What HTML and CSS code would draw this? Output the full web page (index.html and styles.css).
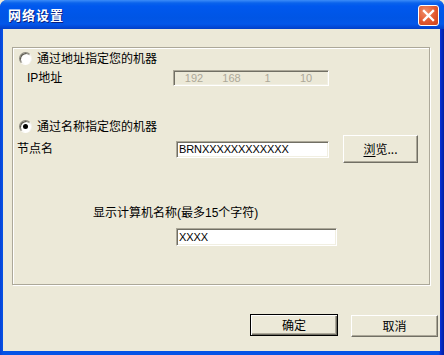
FILE: index.html
```html
<!DOCTYPE html>
<html lang="zh-CN">
<head>
    <meta charset="UTF-8">
    <title>网络设置</title>
    <link rel="stylesheet" href="styles.css">
</head>
<body>
    <div class="window">
        <div class="titlebar">
            <span class="title">网络设置</span>
            <span class="close">
                <svg width="13" height="13" viewBox="0 0 13 13">
                    <path d="M2 2 L11 11 M11 2 L2 11" stroke="#fff" stroke-width="2.4" stroke-linecap="square"/>
                </svg>
            </span>
        </div>

        <div class="client">
            <div class="group">
                <div class="row row-radio1">
                    <span class="radio"></span>
                    <span class="text">通过地址指定您的机器</span>
                </div>
                <div class="row row-ip">
                    <span class="label ip-label">IP地址</span>
                    <div class="ipbox">
                        <span class="octet o1">192</span>
                        <span class="octet o2">168</span>
                        <span class="octet o3">1</span>
                        <span class="octet o4">10</span>
                    </div>
                </div>
                <div class="row row-radio2">
                    <span class="radio checked"></span>
                    <span class="text">通过名称指定您的机器</span>
                </div>
                <div class="row row-node">
                    <span class="label node-label">节点名</span>
                    <div class="textbox node-box">BRNXXXXXXXXXXXX</div>
                    <button class="btn browse"><u>浏</u>览...</button>
                </div>
                <div class="row row-caption">显示计算机名称(最多15个字符)</div>
                <div class="row row-name">
                    <div class="textbox name-box">XXXX</div>
                </div>
            </div>

            <div class="actions">
                <button class="btn default">确定</button>
                <button class="btn cancel">取消</button>
            </div>
        </div>
    </div>
</body>
</html>
```

FILE: styles.css
```css
body {
    margin: 0;
    background: #ece9d8;
    font-family: "Liberation Sans", "Noto Sans CJK SC", sans-serif;
    font-size: 12px;
    color: #000;
}

.window {
    width: 444px;
    height: 355px;
    display: flex;
    flex-direction: column;
    background: linear-gradient(90deg, #0842d6 0, #0553e6 3px, #0553e6 439px, #0831d9 440px, #001ea0 444px);
    border-radius: 7px 7px 0 0;
    overflow: hidden;
}

.titlebar {
    height: 29px;
    box-sizing: border-box;
    padding: 1px 5px 0 8px;
    display: flex;
    align-items: center;
    justify-content: space-between;
    background: linear-gradient(#3c8cf8 0, #0a63ec 3px, #0058ee 6px, #0055e5 18px, #0357ea 24px, #0348d6 27px, #0240c8 29px);
}

.title {
    color: #fff;
    font-family: "Noto Sans CJK SC", sans-serif;
    font-weight: bold;
    font-size: 13px;
    line-height: 14px;
    text-shadow: 1px 1px 0 #0a1e80;
    letter-spacing: 1px;
}

.close {
    width: 21px;
    height: 21px;
    box-sizing: border-box;
    border: 1px solid #fff;
    border-radius: 3px;
    background: radial-gradient(circle at 35% 30%, #f0906a 0, #e2582f 55%, #cc4119 100%);
    display: flex;
    align-items: center;
    justify-content: center;
}

.client {
    flex: 1;
    margin: 0 4px 4px 3px;
    background: #ece9d8;
    padding: 18px 0 0 9px;
    box-sizing: border-box;
}

.group {
    width: 418px;
    height: 238px;
    box-sizing: border-box;
    border: 1px solid #aca899;
    box-shadow: inset 1px 1px 0 #fff, 1px 1px 0 #fff;
}

.row {
    display: flex;
    align-items: center;
}

.text,
.label,
.row-caption {
    font-family: "Liberation Sans", "Noto Sans CJK SC", sans-serif;
    font-size: 12px;
    line-height: 14px;
}

.row-radio1 {
    margin-top: 3px;
    height: 15px;
    padding-left: 6px;
}

.row-ip {
    margin-top: 3px;
    height: 18px;
    padding-left: 14px;
}

.ip-label {
    width: 146px;
}

.row-radio2 {
    margin-top: 32px;
    height: 15px;
    padding-left: 6px;
}

.row-node {
    margin-top: 1px;
    height: 28px;
    padding-left: 4px;
}

.node-label {
    width: 159px;
}

.row-caption {
    margin-top: 43px;
    height: 14px;
    padding-left: 80px;
}

.row-name {
    margin-top: 8px;
    height: 18px;
    padding-left: 163px;
}

.radio {
    width: 13px;
    height: 13px;
    box-sizing: border-box;
    border-radius: 50%;
    border: 1px solid;
    border-color: #8a887d #f4f3ee #fff #8a887d;
    background: radial-gradient(circle at 60% 60%, #fff 0, #fff 45%, #e6e4d9 100%);
    box-shadow: inset 1px 1px 0 #5a584f;
    margin-right: 5px;
    position: relative;
}

.radio.checked::after {
    content: "";
    position: absolute;
    left: 3px;
    top: 3px;
    width: 5px;
    height: 5px;
    border-radius: 50%;
    background: #000;
}

.ipbox,
.textbox {
    box-sizing: border-box;
    border: 1px solid;
    border-color: #aca899 #fff #fff #aca899;
    box-shadow: inset 1px 1px 0 #716f64, inset -1px -1px 0 #f1efe2;
    font-family: "Liberation Sans", sans-serif;
    font-size: 11px;
}

.ipbox {
    width: 156px;
    height: 16px;
    display: flex;
    align-items: center;
    padding-left: 1px;
    color: #aca899;
    background: #ece9d8;
}

.octet {
    text-align: center;
    line-height: 13px;
}

.o1 { width: 38px; }
.o2 { width: 37px; }
.o3 { width: 35px; }
.o4 { width: 42px; }

.textbox {
    background: #fff;
    display: flex;
    align-items: center;
    padding-left: 2px;
    line-height: 13px;
    letter-spacing: -0.1px;
}

.node-box {
    width: 153px;
    height: 17px;
}

.name-box {
    width: 161px;
    height: 18px;
}

.btn {
    box-sizing: border-box;
    padding: 0;
    background: #ece9d8;
    border: 1px solid;
    border-color: #fff #716f64 #716f64 #fff;
    box-shadow: inset -1px -1px 0 #aca899;
    font-family: "Noto Sans CJK SC", sans-serif;
    font-size: 12px;
    line-height: 14px;
    color: #000;
}

.browse {
    margin-left: 14px;
    width: 75px;
    height: 28px;
}

.browse u {
    text-decoration-thickness: 1px;
    text-underline-offset: 2px;
}

.actions {
    display: flex;
    justify-content: flex-end;
    gap: 13px;
    padding-right: 2px;
    margin-top: 29px;
}

.default {
    width: 88px;
    height: 22px;
    border: 1px solid #000;
    box-shadow: inset 1px 1px 0 #fff, inset -1px -1px 0 #716f64, inset -2px -2px 0 #aca899;
}

.cancel {
    width: 87px;
    height: 22px;
    margin-top: 1px;
}
```
